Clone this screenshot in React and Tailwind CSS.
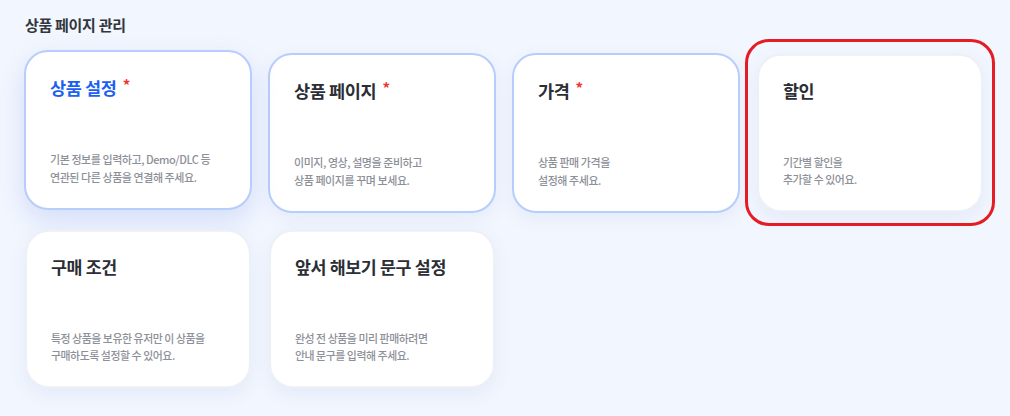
import React from 'react';

const cards = [
  {
    title: '상품 설정',
    required: true,
    active: true,
    lines: ['기본 정보를 입력하고, Demo/DLC 등', '연관된 다른 상품을 연결해 주세요.'],
  },
  {
    title: '상품 페이지',
    required: true,
    lines: ['이미지, 영상, 설명을 준비하고', '상품 페이지를 꾸며 보세요.'],
  },
  {
    title: '가격',
    required: true,
    lines: ['상품 판매 가격을', '설정해 주세요.'],
  },
  {
    title: '할인',
    highlight: true,
    lines: ['기간별 할인을', '추가할 수 있어요.'],
  },
  {
    title: '구매 조건',
    lines: ['특정 상품을 보유한 유저만 이 상품을', '구매하도록 설정할 수 있어요.'],
  },
  {
    title: '앞서 해보기 문구 설정',
    lines: ['완성 전 상품을 미리 판매하려면', '안내 문구를 입력해 주세요.'],
  },
];

function Card({ card }) {
  const { title, required, active, lines } = card;
  // blue border = required step, grey = optional
  const frame = required
    ? 'border-[#b7cdfb]'
    : 'border-[#edf0f6] scale-[0.99]';
  const lift = active
    ? '-translate-y-[3px] shadow-[0_10px_26px_rgba(70,110,220,0.18)]'
    : 'shadow-[0_6px_18px_rgba(70,100,190,0.08)]';

  return (
    <div
      className={`h-[160px] bg-white border-2 rounded-[24px] flex flex-col justify-between pl-6 pr-4 pt-6 pb-[22px] ${frame} ${lift}`}
    >
      <div className="flex items-start">
        <span
          className={`text-[17.5px] leading-6 font-bold tracking-[-0.02em] ${
            active ? 'text-[#1d5ff0]' : 'text-[#2b2e35]'
          }`}
        >
          {title}
        </span>
        {required && (
          <span className="ml-[6px] -mt-[1px] text-[15px] leading-5 font-bold text-[#ef3535]">*</span>
        )}
      </div>
      <div className="text-[11px] leading-[18px] tracking-[-0.04em] text-[#8d9098] font-medium">
        {lines.map((l) => (
          <div key={l}>{l}</div>
        ))}
      </div>
    </div>
  );
}

export default function App() {
  return (
    <div
      className="w-[1010px] h-[416px] bg-[#f2f6fe] pl-6 pt-[15px] overflow-hidden"
      style={{ fontFamily: '"Noto Sans CJK KR", "Noto Sans", sans-serif' }}
    >
      <h2 className="pl-px text-[15px] leading-5 font-bold text-[#33363c] tracking-[-0.02em]">
        상품 페이지 관리
      </h2>

      <div className="mt-[18px] grid grid-cols-[repeat(4,228px)] auto-rows-[160px] gap-4">
        {cards.map((card) =>
          card.highlight ? (
            <div key={card.title} className="relative">
              <Card card={card} />
              <div className="absolute -left-[11px] -right-[11px] -top-[14px] -bottom-[13px] border-[3px] border-[#e41d25] rounded-[24px] pointer-events-none" />
            </div>
          ) : (
            <Card key={card.title} card={card} />
          )
        )}
      </div>
    </div>
  );
}
